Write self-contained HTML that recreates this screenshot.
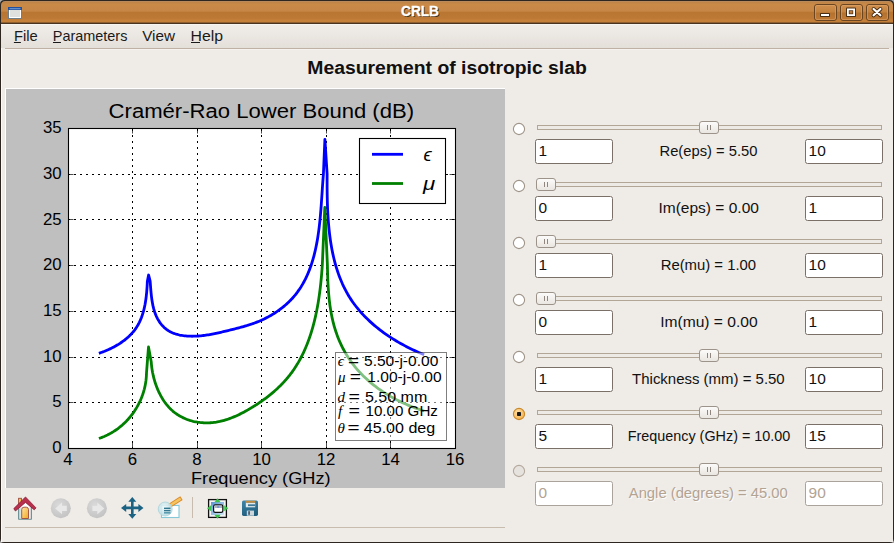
<!DOCTYPE html>
<html><head><meta charset="utf-8"><style>
html,body{margin:0;padding:0}
body{width:894px;height:543px;overflow:hidden;position:relative;background:#efebe7;font-family:"Liberation Sans", sans-serif}
.a{position:absolute}
</style></head><body>
<svg class="a" style="left:0;top:0" width="894" height="543" font-family='"Liberation Sans", sans-serif'>
<rect x="0" y="0" width="894" height="543" fill="#a8a8a8"/><path d="M0,538.5 L0,4.5 Q0,0 4.5,0 L889.5,0 Q894,0 894,4.5 L894,538.5 Q894,543 889.5,543 L4.5,543 Q0,543 0,538.5 Z" fill="#2d2520"/><rect x="1" y="24" width="892" height="518" fill="#efebe7"/><rect x="1" y="24" width="1" height="518" fill="#fbfaf9"/><defs><linearGradient id="tb" x1="0" y1="0" x2="0" y2="24" gradientUnits="userSpaceOnUse"><stop offset="0" stop-color="#b98a5c"/><stop offset="0.08" stop-color="#b98a5c"/><stop offset="0.10" stop-color="#c08447"/><stop offset="0.18" stop-color="#c98a48"/><stop offset="0.46" stop-color="#c68645"/><stop offset="0.52" stop-color="#b97633"/><stop offset="0.76" stop-color="#bc7835"/><stop offset="0.84" stop-color="#c5803a"/><stop offset="0.915" stop-color="#c47f39"/><stop offset="0.917" stop-color="#8f5f30"/><stop offset="0.957" stop-color="#8f5f30"/><stop offset="0.959" stop-color="#4a3420"/><stop offset="1" stop-color="#4a3420"/></linearGradient><linearGradient id="mb" x1="0" y1="24" x2="0" y2="48" gradientUnits="userSpaceOnUse"><stop offset="0" stop-color="#f1eeea"/><stop offset="1" stop-color="#e4dfd9"/></linearGradient><linearGradient id="btn" x1="0" y1="0" x2="0" y2="1"><stop offset="0" stop-color="#d0904f"/><stop offset="0.45" stop-color="#c5833f"/><stop offset="0.55" stop-color="#b5722f"/><stop offset="1" stop-color="#c07b36"/></linearGradient></defs><path d="M1,24 L1,5.5 Q1,1 5.5,1 L888.5,1 Q893,1 893,5.5 L893,24 Z" fill="url(#tb)"/><rect x="8.5" y="7.5" width="13" height="11" fill="#fff" stroke="#6f7f8a" stroke-width="1"/><rect x="10" y="10" width="10" height="7" fill="#dfe1de"/><rect x="8" y="7" width="14" height="3" fill="#1f4f9e"/><rect x="9.5" y="8.3" width="11" height="0.9" fill="#86abd9"/><text x="402.0" y="16.7" font-size="14.2" font-weight="bold" fill="#2e1e10" text-anchor="start" textLength="38" lengthAdjust="spacingAndGlyphs" opacity="0.9">CRLB</text><text x="401.0" y="15.7" font-size="14.2" font-weight="bold" fill="#ffffff" text-anchor="start" textLength="38" lengthAdjust="spacingAndGlyphs" stroke="#fff" stroke-width="0.35">CRLB</text><rect x="814.5" y="4.5" width="22" height="16" rx="2.5" fill="url(#btn)" stroke="#6b4420" stroke-width="1"/><rect x="815.5" y="5.5" width="20" height="14" rx="1.5" fill="none" stroke="#dca36b" stroke-opacity="0.6" stroke-width="1"/><rect x="840.5" y="4.5" width="22" height="16" rx="2.5" fill="url(#btn)" stroke="#6b4420" stroke-width="1"/><rect x="841.5" y="5.5" width="20" height="14" rx="1.5" fill="none" stroke="#dca36b" stroke-opacity="0.6" stroke-width="1"/><rect x="866.5" y="4.5" width="22" height="16" rx="2.5" fill="url(#btn)" stroke="#6b4420" stroke-width="1"/><rect x="867.5" y="5.5" width="20" height="14" rx="1.5" fill="none" stroke="#dca36b" stroke-opacity="0.6" stroke-width="1"/><rect x="820" y="13" width="10" height="4" rx="0.8" fill="#4a2e14"/><rect x="821" y="14" width="8" height="2" fill="#fff"/><rect x="846" y="7.5" width="10" height="9.5" rx="0.8" fill="#4a2e14"/><rect x="847" y="8.5" width="8" height="7.5" fill="#fff"/><rect x="848.8" y="10.3" width="4.4" height="3.9" fill="#4a2e14"/><rect x="849.5" y="11" width="3" height="2.5" fill="#b9773a"/><path d="M873.6,9 L880.4,15.3 M880.4,9 L873.6,15.3" stroke="#4a2e14" stroke-width="4" stroke-linecap="round"/><path d="M873.6,9 L880.4,15.3 M880.4,9 L873.6,15.3" stroke="#fff" stroke-width="2.2" stroke-linecap="round"/><rect x="1" y="24" width="892" height="24" fill="url(#mb)"/><rect x="1" y="24" width="892" height="1" fill="#f7f5f2"/><rect x="5" y="48" width="884" height="1" fill="#bfb2a4"/><rect x="5" y="49" width="884" height="1" fill="#f5f2ef"/><text x="13.95" y="40.8" font-size="14.2" font-weight="normal" fill="#1a1a1a" text-anchor="start" textLength="23.8" lengthAdjust="spacingAndGlyphs" >File</text><rect x="13.9" y="42" width="6.999999999999998" height="1" fill="#1a1a1a"/><text x="52.800000000000004" y="40.8" font-size="14.2" font-weight="normal" fill="#1a1a1a" text-anchor="start" textLength="74.6" lengthAdjust="spacingAndGlyphs" >Parameters</text><rect x="53" y="42" width="8" height="1" fill="#1a1a1a"/><text x="142.2" y="40.8" font-size="14.2" font-weight="normal" fill="#1a1a1a" text-anchor="start" textLength="32.8" lengthAdjust="spacingAndGlyphs" >View</text><text x="190.5" y="40.8" font-size="14.2" font-weight="normal" fill="#1a1a1a" text-anchor="start" textLength="32.5" lengthAdjust="spacingAndGlyphs" >Help</text><rect x="191" y="42" width="9" height="1" fill="#1a1a1a"/><text x="307.3" y="73.8" font-size="17.6" font-weight="bold" fill="#101010" text-anchor="start" textLength="279.5" lengthAdjust="spacingAndGlyphs" >Measurement of isotropic slab</text><rect x="5" y="88" width="500" height="400" fill="#ffffff"/><rect x="6" y="89" width="499" height="399" fill="#bfbfbf"/><rect x="68.0" y="128.0" width="387.0" height="320.0" fill="#fff"/><g stroke="#000" stroke-width="1" stroke-dasharray="2 4" fill="none" shape-rendering="crispEdges"><line x1="132.5" y1="449.0" x2="132.5" y2="128.0"/><line x1="197.5" y1="449.0" x2="197.5" y2="128.0"/><line x1="261.5" y1="449.0" x2="261.5" y2="128.0"/><line x1="326.5" y1="449.0" x2="326.5" y2="128.0"/><line x1="390.5" y1="449.0" x2="390.5" y2="128.0"/><line x1="68.0" y1="402.5" x2="455.0" y2="402.5"/><line x1="68.0" y1="357.5" x2="455.0" y2="357.5"/><line x1="68.0" y1="311.5" x2="455.0" y2="311.5"/><line x1="68.0" y1="265.5" x2="455.0" y2="265.5"/><line x1="68.0" y1="219.5" x2="455.0" y2="219.5"/><line x1="68.0" y1="174.5" x2="455.0" y2="174.5"/></g><g stroke="#000" stroke-width="0.7" fill="none"><line x1="132.5" y1="448.0" x2="132.5" y2="442.5"/><line x1="132.5" y1="128.0" x2="132.5" y2="133.5"/><line x1="197.5" y1="448.0" x2="197.5" y2="442.5"/><line x1="197.5" y1="128.0" x2="197.5" y2="133.5"/><line x1="261.5" y1="448.0" x2="261.5" y2="442.5"/><line x1="261.5" y1="128.0" x2="261.5" y2="133.5"/><line x1="326.5" y1="448.0" x2="326.5" y2="442.5"/><line x1="326.5" y1="128.0" x2="326.5" y2="133.5"/><line x1="390.5" y1="448.0" x2="390.5" y2="442.5"/><line x1="390.5" y1="128.0" x2="390.5" y2="133.5"/><line x1="68.0" y1="402.5" x2="73.5" y2="402.5"/><line x1="455.0" y1="402.5" x2="449.5" y2="402.5"/><line x1="68.0" y1="357.5" x2="73.5" y2="357.5"/><line x1="455.0" y1="357.5" x2="449.5" y2="357.5"/><line x1="68.0" y1="311.5" x2="73.5" y2="311.5"/><line x1="455.0" y1="311.5" x2="449.5" y2="311.5"/><line x1="68.0" y1="265.5" x2="73.5" y2="265.5"/><line x1="455.0" y1="265.5" x2="449.5" y2="265.5"/><line x1="68.0" y1="219.5" x2="73.5" y2="219.5"/><line x1="455.0" y1="219.5" x2="449.5" y2="219.5"/><line x1="68.0" y1="174.5" x2="73.5" y2="174.5"/><line x1="455.0" y1="174.5" x2="449.5" y2="174.5"/></g><path d="M100.22,352.87 L101.12,352.55 L102.03,352.22 L102.93,351.88 L103.83,351.54 L104.72,351.18 L105.62,350.82 L106.50,350.45 L107.39,350.07 L108.27,349.68 L109.15,349.28 L110.02,348.88 L110.89,348.46 L111.75,348.04 L112.61,347.61 L113.46,347.16 L114.31,346.71 L115.15,346.25 L115.98,345.79 L116.81,345.31 L117.62,344.82 L118.44,344.33 L119.24,343.82 L120.04,343.31 L120.82,342.78 L121.60,342.25 L122.37,341.71 L123.13,341.16 L123.89,340.59 L124.63,340.02 L125.36,339.44 L126.08,338.85 L126.79,338.26 L127.50,337.65 L128.19,337.03 L128.86,336.40 L129.53,335.76 L130.18,335.11 L130.83,334.46 L131.46,333.79 L132.07,333.11 L132.68,332.43 L133.27,331.73 L133.85,331.02 L134.41,330.31 L134.96,329.58 L135.49,328.84 L136.01,328.10 L136.52,327.34 L137.01,326.57 L137.48,325.79 L137.94,325.01 L138.38,324.21 L138.81,323.40 L139.23,322.59 L139.63,321.77 L140.02,320.93 L140.39,320.09 L140.75,319.25 L141.10,318.39 L141.44,317.53 L141.76,316.66 L142.07,315.78 L142.37,314.90 L142.66,314.01 L142.93,313.12 L143.20,312.22 L143.45,311.31 L143.70,310.40 L143.93,309.49 L144.15,308.57 L144.36,307.64 L144.57,306.71 L144.76,305.78 L144.95,304.85 L145.12,303.91 L145.29,302.97 L145.45,302.02 L145.60,301.08 L145.74,300.13 L145.88,299.18 L146.01,298.23 L146.13,297.28 L146.24,296.33 L146.35,295.37 L146.45,294.42 L146.55,293.47 L146.64,292.51 L146.72,291.56 L146.80,290.61 L146.88,289.66 L146.95,288.71 L147.01,287.76 L147.08,286.81 L147.13,285.87 L147.19,284.93 L147.24,283.99 L147.28,283.05 L147.33,282.12 L147.37,281.19 L148.60,275.00 L150.13,281.20 L150.23,282.33 L150.32,283.48 L150.41,284.66 L150.50,285.85 L150.60,287.06 L150.69,288.29 L150.79,289.53 L150.90,290.78 L151.01,292.05 L151.13,293.32 L151.26,294.60 L151.40,295.88 L151.55,297.17 L151.72,298.46 L151.90,299.75 L152.10,301.04 L152.31,302.33 L152.54,303.61 L152.79,304.89 L153.06,306.15 L153.36,307.41 L153.67,308.65 L154.02,309.88 L154.39,311.10 L154.78,312.30 L155.21,313.48 L155.66,314.64 L156.14,315.78 L156.65,316.90 L157.19,317.99 L157.76,319.07 L158.35,320.11 L158.98,321.13 L159.63,322.12 L160.32,323.08 L161.03,324.01 L161.77,324.92 L162.54,325.79 L163.34,326.62 L164.16,327.42 L165.02,328.19 L165.90,328.92 L166.82,329.61 L167.76,330.26 L168.73,330.87 L169.73,331.45 L170.75,331.98 L171.80,332.48 L172.88,332.95 L173.97,333.38 L175.08,333.77 L176.22,334.14 L177.37,334.46 L178.54,334.76 L179.72,335.03 L180.92,335.27 L182.14,335.48 L183.36,335.66 L184.59,335.81 L185.83,335.94 L187.08,336.05 L188.34,336.13 L189.60,336.18 L190.87,336.22 L192.13,336.23 L193.40,336.22 L194.67,336.19 L195.94,336.14 L197.20,336.08 L198.47,335.99 L199.73,335.89 L200.98,335.78 L202.24,335.65 L203.49,335.50 L204.75,335.34 L206.00,335.17 L207.24,334.98 L208.49,334.78 L209.73,334.57 L210.97,334.36 L212.21,334.13 L213.44,333.89 L214.68,333.64 L215.91,333.38 L217.14,333.12 L218.36,332.85 L219.59,332.57 L220.81,332.29 L222.03,332.01 L223.25,331.72 L224.46,331.43 L225.67,331.13 L226.89,330.83 L228.09,330.54 L229.30,330.24 L230.50,329.94 L231.70,329.64 L232.90,329.34 L234.10,329.04 L235.29,328.74 L236.48,328.44 L237.67,328.13 L238.85,327.82 L240.04,327.50 L241.22,327.19 L242.39,326.86 L243.57,326.53 L244.74,326.19 L245.91,325.85 L247.08,325.50 L248.24,325.14 L249.40,324.77 L250.56,324.40 L251.72,324.01 L252.87,323.61 L254.02,323.20 L255.17,322.78 L256.31,322.35 L257.45,321.90 L258.59,321.44 L259.72,320.97 L260.85,320.48 L261.98,319.98 L263.11,319.46 L264.23,318.93 L265.35,318.38 L266.46,317.81 L267.57,317.23 L268.67,316.64 L269.76,316.03 L270.85,315.41 L271.94,314.78 L273.01,314.13 L274.08,313.46 L275.13,312.79 L276.18,312.09 L277.22,311.39 L278.25,310.67 L279.27,309.94 L280.28,309.20 L281.28,308.44 L282.27,307.68 L283.24,306.90 L284.20,306.10 L285.15,305.30 L286.09,304.48 L287.01,303.65 L287.92,302.81 L288.81,301.96 L289.69,301.10 L290.55,300.23 L291.40,299.34 L292.23,298.44 L293.04,297.54 L293.84,296.62 L294.62,295.70 L295.38,294.76 L296.13,293.81 L296.87,292.85 L297.59,291.89 L298.29,290.91 L298.98,289.93 L299.66,288.93 L300.32,287.93 L300.97,286.92 L301.60,285.89 L302.22,284.86 L302.82,283.83 L303.41,282.78 L303.99,281.72 L304.56,280.66 L305.11,279.59 L305.65,278.51 L306.17,277.43 L306.69,276.33 L307.19,275.23 L307.68,274.13 L308.16,273.01 L308.62,271.89 L309.07,270.76 L309.52,269.63 L309.95,268.49 L310.37,267.34 L310.78,266.19 L311.18,265.03 L311.57,263.87 L311.94,262.70 L312.31,261.52 L312.67,260.34 L313.02,259.16 L313.35,257.97 L313.68,256.78 L314.00,255.58 L314.31,254.37 L314.61,253.17 L314.91,251.95 L315.19,250.74 L315.47,249.52 L315.73,248.30 L315.99,247.07 L316.24,245.84 L316.49,244.61 L316.72,243.37 L316.95,242.13 L317.17,240.89 L317.39,239.65 L317.60,238.40 L317.80,237.16 L317.99,235.91 L318.18,234.65 L318.36,233.40 L318.54,232.14 L318.71,230.89 L318.88,229.63 L319.04,228.37 L319.19,227.11 L319.34,225.85 L319.48,224.59 L319.62,223.32 L319.76,222.06 L319.89,220.80 L320.02,219.54 L320.14,218.27 L320.26,217.01 L320.38,215.75 L320.49,214.49 L320.60,213.23 L320.70,211.97 L320.81,210.71 L320.91,209.45 L321.00,208.19 L321.10,206.94 L321.19,205.69 L321.28,204.44 L321.37,203.19 L321.46,201.94 L321.54,200.70 L321.63,199.45 L321.71,198.22 L321.79,196.98 L321.88,195.75 L321.96,194.51 L322.04,193.29 L322.12,192.06 L322.20,190.84 L322.28,189.63 L322.36,188.41 L322.44,187.21 L322.52,186.00 L322.60,184.80 L322.69,183.60 L322.77,182.41 L322.86,181.23 L322.95,180.05 L323.04,178.87 L323.13,177.70 L323.22,176.53 L323.32,175.37 L323.41,174.22 L324.90,139.30 L327.12,174.20 L327.11,176.34 L327.10,178.49 L327.10,180.66 L327.10,182.84 L327.10,185.03 L327.11,187.22 L327.13,189.43 L327.15,191.64 L327.18,193.87 L327.21,196.10 L327.26,198.34 L327.31,200.58 L327.37,202.83 L327.45,205.08 L327.53,207.34 L327.62,209.60 L327.73,211.86 L327.85,214.13 L327.99,216.40 L328.14,218.67 L328.30,220.94 L328.48,223.20 L328.67,225.47 L328.89,227.74 L329.12,230.00 L329.37,232.26 L329.63,234.52 L329.92,236.78 L330.23,239.03 L330.55,241.27 L330.90,243.51 L331.28,245.74 L331.67,247.96 L332.09,250.18 L332.53,252.39 L333.00,254.59 L333.49,256.77 L334.01,258.95 L334.56,261.12 L335.13,263.28 L335.73,265.42 L336.37,267.55 L337.03,269.67 L337.72,271.77 L338.44,273.86 L339.19,275.93 L339.98,277.99 L340.80,280.03 L341.65,282.05 L342.53,284.05 L343.46,286.04 L344.41,288.01 L345.41,289.95 L346.44,291.88 L347.50,293.79 L348.61,295.67 L349.75,297.53 L350.94,299.37 L352.16,301.18 L353.42,302.97 L354.72,304.74 L356.06,306.49 L357.43,308.21 L358.84,309.91 L360.28,311.58 L361.75,313.23 L363.26,314.86 L364.79,316.46 L366.36,318.04 L367.96,319.59 L369.58,321.12 L371.24,322.63 L372.91,324.11 L374.62,325.57 L376.35,327.01 L378.10,328.42 L379.88,329.81 L381.67,331.17 L383.49,332.51 L385.33,333.83 L387.19,335.12 L389.06,336.39 L390.96,337.63 L392.86,338.85 L394.79,340.04 L396.73,341.21 L398.68,342.35 L400.65,343.48 L402.62,344.57 L404.61,345.64 L406.61,346.69 L408.61,347.71 L410.63,348.71 L412.65,349.68 L414.67,350.63 L416.71,351.56 L418.74,352.45 L420.78,353.33 L422.83,354.18" fill="none" stroke="#0000ff" stroke-width="2.8" stroke-linejoin="round" stroke-linecap="square"/><path d="M100.24,437.99 L101.06,437.69 L101.87,437.39 L102.68,437.08 L103.48,436.75 L104.28,436.42 L105.07,436.07 L105.86,435.72 L106.64,435.35 L107.42,434.98 L108.19,434.59 L108.95,434.20 L109.71,433.80 L110.46,433.39 L111.21,432.97 L111.95,432.53 L112.68,432.09 L113.41,431.65 L114.13,431.19 L114.84,430.72 L115.55,430.25 L116.26,429.76 L116.95,429.27 L117.64,428.77 L118.32,428.26 L119.00,427.74 L119.67,427.22 L120.33,426.68 L120.99,426.14 L121.64,425.59 L122.28,425.04 L122.91,424.47 L123.54,423.90 L124.16,423.32 L124.78,422.73 L125.38,422.14 L125.98,421.54 L126.58,420.93 L127.16,420.31 L127.74,419.69 L128.31,419.06 L128.87,418.42 L129.42,417.78 L129.97,417.13 L130.51,416.47 L131.04,415.81 L131.56,415.14 L132.08,414.47 L132.59,413.79 L133.09,413.10 L133.58,412.41 L134.06,411.71 L134.54,411.00 L135.00,410.29 L135.46,409.58 L135.91,408.86 L136.35,408.13 L136.79,407.40 L137.21,406.66 L137.63,405.92 L138.03,405.18 L138.43,404.42 L138.82,403.67 L139.20,402.91 L139.57,402.14 L139.93,401.37 L140.29,400.60 L140.63,399.82 L140.97,399.04 L141.29,398.25 L141.61,397.46 L141.92,396.66 L142.22,395.86 L142.51,395.06 L142.78,394.26 L143.05,393.45 L143.31,392.63 L143.56,391.82 L143.80,391.00 L144.03,390.17 L144.26,389.35 L144.47,388.52 L144.67,387.69 L144.86,386.85 L145.04,386.02 L145.21,385.18 L145.37,384.33 L145.52,383.49 L145.66,382.64 L145.79,381.79 L145.91,380.94 L146.01,380.09 L146.11,379.23 L146.20,378.37 L146.27,377.51 L146.34,376.65 L146.39,375.79 L146.44,374.93 L146.47,374.06 L146.49,373.20 L148.50,347.00 L151.26,361.98 L151.34,363.12 L151.43,364.26 L151.54,365.41 L151.67,366.57 L151.82,367.73 L151.98,368.89 L152.16,370.06 L152.36,371.23 L152.57,372.41 L152.81,373.59 L153.06,374.76 L153.32,375.94 L153.61,377.12 L153.91,378.29 L154.23,379.47 L154.57,380.64 L154.92,381.81 L155.29,382.97 L155.68,384.13 L156.09,385.29 L156.51,386.43 L156.95,387.58 L157.41,388.71 L157.89,389.83 L158.38,390.95 L158.89,392.06 L159.42,393.15 L159.97,394.24 L160.53,395.31 L161.11,396.37 L161.71,397.42 L162.33,398.46 L162.96,399.47 L163.61,400.48 L164.28,401.47 L164.97,402.44 L165.67,403.39 L166.39,404.33 L167.13,405.24 L167.89,406.14 L168.66,407.02 L169.45,407.87 L170.26,408.71 L171.09,409.52 L171.94,410.31 L172.80,411.07 L173.68,411.81 L174.58,412.53 L175.49,413.22 L176.42,413.88 L177.37,414.53 L178.33,415.14 L179.30,415.74 L180.29,416.31 L181.29,416.85 L182.31,417.37 L183.34,417.87 L184.38,418.34 L185.43,418.79 L186.50,419.22 L187.57,419.62 L188.65,419.99 L189.75,420.35 L190.85,420.68 L191.96,420.98 L193.08,421.27 L194.20,421.53 L195.33,421.76 L196.47,421.98 L197.62,422.17 L198.77,422.33 L199.92,422.48 L201.08,422.60 L202.24,422.69 L203.41,422.77 L204.57,422.82 L205.74,422.85 L206.92,422.86 L208.09,422.84 L209.26,422.80 L210.43,422.74 L211.61,422.66 L212.78,422.55 L213.95,422.42 L215.12,422.27 L216.28,422.10 L217.44,421.90 L218.60,421.68 L219.76,421.45 L220.91,421.19 L222.06,420.91 L223.20,420.61 L224.35,420.29 L225.48,419.95 L226.62,419.60 L227.75,419.23 L228.88,418.84 L230.00,418.43 L231.12,418.01 L232.24,417.57 L233.35,417.12 L234.46,416.66 L235.56,416.18 L236.66,415.68 L237.76,415.18 L238.85,414.66 L239.94,414.13 L241.02,413.59 L242.10,413.03 L243.17,412.47 L244.25,411.90 L245.31,411.32 L246.37,410.73 L247.43,410.13 L248.49,409.53 L249.53,408.91 L250.58,408.30 L251.62,407.67 L252.65,407.04 L253.68,406.40 L254.71,405.76 L255.73,405.11 L256.75,404.46 L257.75,403.80 L258.76,403.13 L259.76,402.45 L260.75,401.77 L261.74,401.09 L262.72,400.39 L263.69,399.69 L264.66,398.99 L265.62,398.28 L266.58,397.56 L267.53,396.83 L268.47,396.10 L269.40,395.36 L270.33,394.62 L271.25,393.86 L272.16,393.11 L273.07,392.34 L273.97,391.57 L274.86,390.79 L275.74,390.00 L276.61,389.21 L277.48,388.41 L278.34,387.60 L279.18,386.79 L280.02,385.97 L280.86,385.14 L281.68,384.31 L282.49,383.47 L283.30,382.62 L284.09,381.76 L284.88,380.90 L285.66,380.02 L286.42,379.15 L287.18,378.26 L287.93,377.37 L288.66,376.47 L289.39,375.56 L290.11,374.64 L290.81,373.72 L291.51,372.79 L292.20,371.85 L292.87,370.91 L293.54,369.96 L294.19,369.00 L294.84,368.03 L295.47,367.06 L296.10,366.08 L296.71,365.09 L297.32,364.10 L297.92,363.10 L298.50,362.10 L299.08,361.08 L299.65,360.07 L300.21,359.04 L300.76,358.01 L301.30,356.98 L301.83,355.94 L302.35,354.89 L302.87,353.84 L303.37,352.79 L303.87,351.72 L304.36,350.66 L304.84,349.58 L305.31,348.51 L305.77,347.43 L306.22,346.34 L306.67,345.25 L307.11,344.15 L307.54,343.06 L307.96,341.95 L308.37,340.84 L308.78,339.73 L309.18,338.62 L309.57,337.50 L309.95,336.37 L310.33,335.25 L310.70,334.12 L311.06,332.99 L311.41,331.85 L311.76,330.71 L312.10,329.57 L312.43,328.42 L312.76,327.27 L313.08,326.12 L313.39,324.97 L313.70,323.81 L314.00,322.65 L314.29,321.49 L314.57,320.33 L314.85,319.16 L315.13,318.00 L315.40,316.83 L315.66,315.66 L315.91,314.48 L316.16,313.31 L316.41,312.13 L316.64,310.96 L316.88,309.78 L317.10,308.60 L317.32,307.42 L317.54,306.24 L317.75,305.06 L317.96,303.88 L318.16,302.69 L318.35,301.51 L318.54,300.33 L318.72,299.14 L318.90,297.96 L319.08,296.78 L319.25,295.59 L319.42,294.41 L319.58,293.23 L319.73,292.04 L319.89,290.86 L320.04,289.68 L320.18,288.50 L320.32,287.32 L320.45,286.14 L320.59,284.96 L320.71,283.78 L320.84,282.61 L320.96,281.43 L321.08,280.26 L321.19,279.09 L321.30,277.92 L321.41,276.75 L321.51,275.59 L321.61,274.42 L321.70,273.26 L321.80,272.10 L321.89,270.95 L321.98,269.79 L322.06,268.64 L322.14,267.49 L322.22,266.34 L322.30,265.20 L324.80,207.50 L327.42,265.20 L327.45,267.07 L327.49,268.95 L327.53,270.84 L327.57,272.73 L327.63,274.63 L327.69,276.53 L327.75,278.44 L327.83,280.35 L327.92,282.26 L328.01,284.18 L328.12,286.10 L328.24,288.02 L328.37,289.95 L328.51,291.87 L328.67,293.80 L328.84,295.72 L329.03,297.65 L329.23,299.57 L329.45,301.49 L329.69,303.41 L329.94,305.33 L330.22,307.24 L330.51,309.14 L330.83,311.05 L331.16,312.95 L331.52,314.84 L331.90,316.72 L332.30,318.60 L332.73,320.48 L333.18,322.34 L333.66,324.19 L334.16,326.04 L334.69,327.88 L335.25,329.70 L335.84,331.52 L336.45,333.33 L337.10,335.12 L337.77,336.90 L338.47,338.67 L339.20,340.42 L339.95,342.17 L340.74,343.90 L341.55,345.61 L342.39,347.31 L343.26,348.99 L344.16,350.66 L345.08,352.31 L346.04,353.95 L347.02,355.57 L348.03,357.17 L349.06,358.75 L350.13,360.32 L351.22,361.86 L352.34,363.39 L353.49,364.90 L354.66,366.38 L355.86,367.85 L357.09,369.29 L358.34,370.72 L359.62,372.12 L360.93,373.51 L362.25,374.87 L363.60,376.22 L364.98,377.54 L366.37,378.84 L367.79,380.12 L369.23,381.39 L370.68,382.63 L372.16,383.85 L373.66,385.05 L375.18,386.22 L376.71,387.38 L378.26,388.52 L379.83,389.63 L381.42,390.73 L383.02,391.80 L384.63,392.85 L386.26,393.88 L387.91,394.89 L389.56,395.88 L391.23,396.85 L392.92,397.80 L394.61,398.72 L396.31,399.62 L398.03,400.51 L399.75,401.37 L401.49,402.20 L403.23,403.02 L404.98,403.82 L406.74,404.59 L408.51,405.34 L410.28,406.08 L412.06,406.78 L413.84,407.47 L415.63,408.14 L417.42,408.78 L419.21,409.40 L421.01,410.00 L422.81,410.58" fill="none" stroke="#008000" stroke-width="2.8" stroke-linejoin="round" stroke-linecap="square"/><rect x="68.5" y="128.5" width="387.0" height="320.0" fill="none" stroke="#000" stroke-width="1.1"/><rect x="359.5" y="138.5" width="86" height="65" fill="#fff" stroke="#000" stroke-width="1.1"/><line x1="372" y1="154.3" x2="403" y2="154.3" stroke="#0000ff" stroke-width="2.8"/><line x1="372" y1="183.5" x2="403" y2="183.5" stroke="#008000" stroke-width="2.8"/><text x="423.6" y="161.3" font-size="19" font-weight="normal" fill="#000" text-anchor="start" textLength="8.2" lengthAdjust="spacingAndGlyphs" font-style="italic">ϵ</text><text x="423.0" y="190.2" font-size="18" font-weight="normal" fill="#000" text-anchor="start" textLength="12.2" lengthAdjust="spacingAndGlyphs" font-style="italic">μ</text><rect x="335.5" y="352.5" width="111" height="88" fill="#fff" fill-opacity="0.5" stroke="#000" stroke-opacity="0.5" stroke-width="1"/><text x="337.8" y="365.8" font-size="15" font-family='"Liberation Serif", serif' font-style="italic">ϵ</text><text x="348.1" y="365.8" font-size="14" font-weight="normal" fill="#000" text-anchor="start" textLength="11.1" lengthAdjust="spacingAndGlyphs" >=</text><text x="364.0" y="365.8" font-size="14" font-weight="normal" fill="#000" text-anchor="start" textLength="74.3" lengthAdjust="spacingAndGlyphs" >5.50-j-0.00</text><text x="338.1" y="382.4" font-size="15" font-family='"Liberation Serif", serif' font-style="italic">μ</text><text x="349.8" y="382.4" font-size="14" font-weight="normal" fill="#000" text-anchor="start" textLength="11.2" lengthAdjust="spacingAndGlyphs" >=</text><text x="367.3" y="382.4" font-size="14" font-weight="normal" fill="#000" text-anchor="start" textLength="74.3" lengthAdjust="spacingAndGlyphs" >1.00-j-0.00</text><text x="337.6" y="402.1" font-size="15" font-family='"Liberation Serif", serif' font-style="italic">d</text><text x="348.5" y="402.1" font-size="14" font-weight="normal" fill="#000" text-anchor="start" textLength="11.5" lengthAdjust="spacingAndGlyphs" >=</text><text x="364.9" y="402.1" font-size="14" font-weight="normal" fill="#000" text-anchor="start" textLength="62.4" lengthAdjust="spacingAndGlyphs" >5.50 mm</text><text x="338.1" y="416" font-size="15" font-family='"Liberation Serif", serif' font-style="italic">f</text><text x="348.5" y="416" font-size="14" font-weight="normal" fill="#000" text-anchor="start" textLength="11.5" lengthAdjust="spacingAndGlyphs" >=</text><text x="365.5" y="416" font-size="14" font-weight="normal" fill="#000" text-anchor="start" textLength="72.4" lengthAdjust="spacingAndGlyphs" >10.00 GHz</text><text x="337.6" y="433" font-size="15" font-family='"Liberation Serif", serif' font-style="italic">θ</text><text x="347.40000000000003" y="433" font-size="14" font-weight="normal" fill="#000" text-anchor="start" textLength="12.1" lengthAdjust="spacingAndGlyphs" >=</text><text x="363.8" y="433" font-size="14" font-weight="normal" fill="#000" text-anchor="start" textLength="71.4" lengthAdjust="spacingAndGlyphs" >45.00 deg</text><text x="68.0" y="464.6" font-size="16.8" font-weight="normal" fill="#000" text-anchor="middle" >4</text><text x="132.5" y="464.6" font-size="16.8" font-weight="normal" fill="#000" text-anchor="middle" >6</text><text x="197.0" y="464.6" font-size="16.8" font-weight="normal" fill="#000" text-anchor="middle" >8</text><text x="261.5" y="464.6" font-size="16.8" font-weight="normal" fill="#000" text-anchor="middle" >10</text><text x="326.0" y="464.6" font-size="16.8" font-weight="normal" fill="#000" text-anchor="middle" >12</text><text x="390.5" y="464.6" font-size="16.8" font-weight="normal" fill="#000" text-anchor="middle" >14</text><text x="455.0" y="464.6" font-size="16.8" font-weight="normal" fill="#000" text-anchor="middle" >16</text><text x="61.6" y="453.2" font-size="16.8" font-weight="normal" fill="#000" text-anchor="end" >0</text><text x="61.6" y="407.48571428571427" font-size="16.8" font-weight="normal" fill="#000" text-anchor="end" >5</text><text x="61.6" y="361.77142857142854" font-size="16.8" font-weight="normal" fill="#000" text-anchor="end" >10</text><text x="61.6" y="316.0571428571429" font-size="16.8" font-weight="normal" fill="#000" text-anchor="end" >15</text><text x="61.6" y="270.34285714285716" font-size="16.8" font-weight="normal" fill="#000" text-anchor="end" >20</text><text x="61.6" y="224.6285714285714" font-size="16.8" font-weight="normal" fill="#000" text-anchor="end" >25</text><text x="61.6" y="178.9142857142857" font-size="16.8" font-weight="normal" fill="#000" text-anchor="end" >30</text><text x="61.6" y="133.2" font-size="16.8" font-weight="normal" fill="#000" text-anchor="end" >35</text><text x="108.6" y="117.6" font-size="19.4" font-weight="normal" fill="#000" text-anchor="start" textLength="305.5" lengthAdjust="spacingAndGlyphs" >Cramér-Rao Lower Bound (dB)</text><text x="191.0" y="484.4" font-size="16.8" font-weight="normal" fill="#000" text-anchor="start" textLength="139.6" lengthAdjust="spacingAndGlyphs" >Frequency (GHz)</text><rect x="5" y="527" width="500" height="1" fill="#c8bcaf"/><rect x="192" y="497" width="1" height="21" fill="#c8bcaf"/><defs><linearGradient id="door" x1="0" y1="0" x2="1" y2="1"><stop offset="0" stop-color="#fde7a8"/><stop offset="1" stop-color="#f2a81d"/></linearGradient><linearGradient id="wall" x1="0" y1="0" x2="1" y2="0"><stop offset="0" stop-color="#b8c2c4"/><stop offset="0.3" stop-color="#ffffff"/><stop offset="0.8" stop-color="#ffffff"/><stop offset="1" stop-color="#b8c2c4"/></linearGradient></defs><rect x="18.6" y="498.3" width="2.8" height="8" fill="#f5c35a" stroke="#9b4a3a" stroke-width="0.9"/><path d="M18.5,507.5 L25.5,501 L31.5,507 L31.5,519.3 L18.5,519.3 Z" fill="url(#wall)" stroke="#6f9297" stroke-width="1"/><path d="M21.7,518.5 L21.7,509.5 Q21.7,507.2 24,507.2 L26.3,507.2 Q28.5,507.2 28.5,509.5 L28.5,518.5 Z" fill="url(#door)" stroke="#9b4a3a" stroke-width="0.9"/><path d="M13.8,508.6 L25.5,497 L36,507.9 L34.2,509.8 L25.5,502.4 L15.4,511 Z" fill="#b8304e" stroke="#8a1c33" stroke-width="0.8" stroke-linejoin="round"/><defs><radialGradient id="ci" cx="0.4" cy="0.35" r="0.7"><stop offset="0" stop-color="#dadada"/><stop offset="1" stop-color="#c2c2c2"/></radialGradient></defs><circle cx="60.8" cy="508.2" r="10" fill="url(#ci)"/><path d="M55.2,508.4 L62,502.4 L62,505.8 L66.8,505.8 L66.8,510.9 L62,510.9 L62,514.3 Z" fill="#e8e8e8"/><circle cx="96.9" cy="508.2" r="10" fill="url(#ci)"/><path d="M104.3,508.4 L97.3,502.4 L97.3,505.8 L92.4,505.8 L92.4,510.9 L97.3,510.9 L97.3,514.3 Z" fill="#e8e8e8"/><g fill="#1b6283"><path d="M132.3,497 L136.3,501.8 L133.6,501.8 L133.6,506.6 L138.4,506.6 L138.4,503.9 L143.5,507.9 L138.4,511.9 L138.4,509.2 L133.6,509.2 L133.6,514 L136.3,514 L132.3,518.8 L128.3,514 L131,514 L131,509.2 L126.2,509.2 L126.2,511.9 L121,507.9 L126.2,503.9 L126.2,506.6 L131,506.6 L131,501.8 L128.3,501.8 Z"/></g><rect x="161.5" y="505.5" width="17.5" height="12" fill="#fff" stroke="#86c8d8" stroke-width="1.1"/><path d="M171,504.8 L179.6,499.4" stroke="#d98a2a" stroke-width="4.4" stroke-linecap="square"/><path d="M171,504.8 L179.6,499.4" stroke="#f6c45e" stroke-width="2.6" stroke-linecap="square"/><defs><radialGradient id="lens" cx="0.45" cy="0.4" r="0.6"><stop offset="0" stop-color="#eef8fa"/><stop offset="1" stop-color="#b7dbe2"/></radialGradient></defs><circle cx="165.2" cy="509" r="7" fill="url(#lens)" fill-opacity="0.9" stroke="#a9d3dc" stroke-width="0.8"/><g fill="#34788f"><rect x="164" y="507.6" width="6.5" height="1.4"/><rect x="164" y="509.9" width="6.5" height="1.4"/><rect x="164" y="512" width="6.5" height="1.6" fill="#5a9bb0"/></g><defs><linearGradient id="sp" x1="0" y1="0" x2="1" y2="1"><stop offset="0" stop-color="#5b95d6"/><stop offset="1" stop-color="#cfe6f6"/></linearGradient></defs><rect x="208.6" y="499.6" width="17.8" height="17.8" fill="#f4f4f4" stroke="#111" stroke-width="1.3"/><rect x="211" y="502" width="13" height="13" fill="url(#sp)"/><rect x="213.6" y="504.8" width="9.2" height="7.6" rx="1.6" fill="#fff" stroke="#111" stroke-width="1.2"/><rect x="214.4" y="505.6" width="7.6" height="2.4" fill="#a9b4bf"/><rect x="217.2" y="505.6" width="2" height="2.4" fill="#7b95d6"/><g fill="#3cc24c"><path d="M217.5,498.2 L220.6,502.2 L214.4,502.2 Z"/><path d="M217.5,518.8 L220.6,514.8 L214.4,514.8 Z"/><path d="M207,508.2 L211,505.2 L211,511.2 Z"/><path d="M228.2,508.2 L224.2,505.2 L224.2,511.2 Z"/></g><defs><linearGradient id="fl" x1="0" y1="0" x2="0.3" y2="1"><stop offset="0" stop-color="#3f86aa"/><stop offset="1" stop-color="#215e7e"/></linearGradient></defs><path d="M242,502.2 Q242,500.6 243.6,500.6 L256.4,500.6 Q258,500.6 258,502.2 L258,514.3 Q258,515.9 256.4,515.9 L243.6,515.9 Q242,515.9 242,514.3 Z" fill="url(#fl)"/><rect x="245.5" y="500.8" width="9.8" height="2" fill="#c28a3e"/><rect x="245.8" y="502.9" width="9.4" height="4.4" fill="#dfe9ee"/><rect x="248" y="504.3" width="7" height="1.8" fill="#3f7897"/><rect x="246.8" y="510.6" width="7.2" height="5.1" fill="#cdd6da"/><rect x="248.4" y="511.2" width="1.3" height="3.6" fill="#14304a"/><defs><linearGradient id="hd" x1="0" y1="0" x2="0" y2="1"><stop offset="0" stop-color="#fdfcfb"/><stop offset="1" stop-color="#e9e5e0"/></linearGradient><radialGradient id="rsel" cx="0.4" cy="0.35" r="0.7"><stop offset="0" stop-color="#ffe0a8"/><stop offset="1" stop-color="#f6b045"/></radialGradient></defs><circle cx="519" cy="129" r="5.6" fill="#fff" stroke="#9f9589" stroke-width="1.1"/><rect x="537.5" y="125.5" width="344" height="4" fill="#ede9e5" stroke="#b2a697" stroke-width="1"/><rect x="699.5" y="121.5" width="19" height="12" rx="2.5" fill="url(#hd)" stroke="#9c948b" stroke-width="1"/><rect x="707" y="125" width="1" height="5" fill="#8f877f"/><rect x="710" y="125" width="1" height="5" fill="#8f877f"/><rect x="535.5" y="139.5" width="77" height="24" rx="2" fill="#fff" stroke="#7a7068" stroke-width="1"/><text x="538.6" y="156.4" font-size="15" font-weight="normal" fill="#111" text-anchor="start" textLength="8.6" lengthAdjust="spacingAndGlyphs" >1</text><rect x="805.5" y="139.5" width="77" height="24" rx="2" fill="#fff" stroke="#7a7068" stroke-width="1"/><text x="808.6" y="156.4" font-size="15" font-weight="normal" fill="#111" text-anchor="start" textLength="17.2" lengthAdjust="spacingAndGlyphs" >10</text><text x="708.5" y="156" font-size="14.2" font-weight="normal" fill="#111" text-anchor="middle" textLength="98" lengthAdjust="spacingAndGlyphs" >Re(eps) = 5.50</text><circle cx="519" cy="186" r="5.6" fill="#fff" stroke="#9f9589" stroke-width="1.1"/><rect x="537.5" y="182.5" width="344" height="4" fill="#ede9e5" stroke="#b2a697" stroke-width="1"/><rect x="536.5" y="178.5" width="19" height="12" rx="2.5" fill="url(#hd)" stroke="#9c948b" stroke-width="1"/><rect x="544" y="182" width="1" height="5" fill="#8f877f"/><rect x="547" y="182" width="1" height="5" fill="#8f877f"/><rect x="535.5" y="196.5" width="77" height="24" rx="2" fill="#fff" stroke="#7a7068" stroke-width="1"/><text x="538.6" y="213.4" font-size="15" font-weight="normal" fill="#111" text-anchor="start" textLength="8.6" lengthAdjust="spacingAndGlyphs" >0</text><rect x="805.5" y="196.5" width="77" height="24" rx="2" fill="#fff" stroke="#7a7068" stroke-width="1"/><text x="808.6" y="213.4" font-size="15" font-weight="normal" fill="#111" text-anchor="start" textLength="8.6" lengthAdjust="spacingAndGlyphs" >1</text><text x="708.7" y="213" font-size="14.2" font-weight="normal" fill="#111" text-anchor="middle" textLength="100.5" lengthAdjust="spacingAndGlyphs" >Im(eps) = 0.00</text><circle cx="519" cy="243" r="5.6" fill="#fff" stroke="#9f9589" stroke-width="1.1"/><rect x="537.5" y="239.5" width="344" height="4" fill="#ede9e5" stroke="#b2a697" stroke-width="1"/><rect x="536.5" y="235.5" width="19" height="12" rx="2.5" fill="url(#hd)" stroke="#9c948b" stroke-width="1"/><rect x="544" y="239" width="1" height="5" fill="#8f877f"/><rect x="547" y="239" width="1" height="5" fill="#8f877f"/><rect x="535.5" y="253.5" width="77" height="24" rx="2" fill="#fff" stroke="#7a7068" stroke-width="1"/><text x="538.6" y="270.4" font-size="15" font-weight="normal" fill="#111" text-anchor="start" textLength="8.6" lengthAdjust="spacingAndGlyphs" >1</text><rect x="805.5" y="253.5" width="77" height="24" rx="2" fill="#fff" stroke="#7a7068" stroke-width="1"/><text x="808.6" y="270.4" font-size="15" font-weight="normal" fill="#111" text-anchor="start" textLength="17.2" lengthAdjust="spacingAndGlyphs" >10</text><text x="708.4" y="270" font-size="14.2" font-weight="normal" fill="#111" text-anchor="middle" textLength="95.5" lengthAdjust="spacingAndGlyphs" >Re(mu) = 1.00</text><circle cx="519" cy="300" r="5.6" fill="#fff" stroke="#9f9589" stroke-width="1.1"/><rect x="537.5" y="296.5" width="344" height="4" fill="#ede9e5" stroke="#b2a697" stroke-width="1"/><rect x="536.5" y="292.5" width="19" height="12" rx="2.5" fill="url(#hd)" stroke="#9c948b" stroke-width="1"/><rect x="544" y="296" width="1" height="5" fill="#8f877f"/><rect x="547" y="296" width="1" height="5" fill="#8f877f"/><rect x="535.5" y="310.5" width="77" height="24" rx="2" fill="#fff" stroke="#7a7068" stroke-width="1"/><text x="538.6" y="327.4" font-size="15" font-weight="normal" fill="#111" text-anchor="start" textLength="8.6" lengthAdjust="spacingAndGlyphs" >0</text><rect x="805.5" y="310.5" width="77" height="24" rx="2" fill="#fff" stroke="#7a7068" stroke-width="1"/><text x="808.6" y="327.4" font-size="15" font-weight="normal" fill="#111" text-anchor="start" textLength="8.6" lengthAdjust="spacingAndGlyphs" >1</text><text x="708.9" y="327" font-size="14.2" font-weight="normal" fill="#111" text-anchor="middle" textLength="97.5" lengthAdjust="spacingAndGlyphs" >Im(mu) = 0.00</text><circle cx="519" cy="357" r="5.6" fill="#fff" stroke="#9f9589" stroke-width="1.1"/><rect x="537.5" y="353.5" width="344" height="4" fill="#ede9e5" stroke="#b2a697" stroke-width="1"/><rect x="699.5" y="349.5" width="19" height="12" rx="2.5" fill="url(#hd)" stroke="#9c948b" stroke-width="1"/><rect x="707" y="353" width="1" height="5" fill="#8f877f"/><rect x="710" y="353" width="1" height="5" fill="#8f877f"/><rect x="535.5" y="367.5" width="77" height="24" rx="2" fill="#fff" stroke="#7a7068" stroke-width="1"/><text x="538.6" y="384.4" font-size="15" font-weight="normal" fill="#111" text-anchor="start" textLength="8.6" lengthAdjust="spacingAndGlyphs" >1</text><rect x="805.5" y="367.5" width="77" height="24" rx="2" fill="#fff" stroke="#7a7068" stroke-width="1"/><text x="808.6" y="384.4" font-size="15" font-weight="normal" fill="#111" text-anchor="start" textLength="17.2" lengthAdjust="spacingAndGlyphs" >10</text><text x="708.4" y="384" font-size="14.2" font-weight="normal" fill="#111" text-anchor="middle" textLength="152.6" lengthAdjust="spacingAndGlyphs" >Thickness (mm) = 5.50</text><circle cx="519" cy="414" r="5.6" fill="url(#rsel)" stroke="#c98a2e" stroke-width="1.1"/><rect x="517" y="412" width="4" height="4" rx="0.8" fill="#1a1a1a"/><rect x="537.5" y="410.5" width="344" height="4" fill="#ede9e5" stroke="#b2a697" stroke-width="1"/><rect x="699.5" y="406.5" width="19" height="12" rx="2.5" fill="url(#hd)" stroke="#9c948b" stroke-width="1"/><rect x="707" y="410" width="1" height="5" fill="#8f877f"/><rect x="710" y="410" width="1" height="5" fill="#8f877f"/><rect x="535.5" y="424.5" width="77" height="24" rx="2" fill="#fff" stroke="#7a7068" stroke-width="1"/><text x="538.6" y="441.4" font-size="15" font-weight="normal" fill="#111" text-anchor="start" textLength="8.6" lengthAdjust="spacingAndGlyphs" >5</text><rect x="805.5" y="424.5" width="77" height="24" rx="2" fill="#fff" stroke="#7a7068" stroke-width="1"/><text x="808.6" y="441.4" font-size="15" font-weight="normal" fill="#111" text-anchor="start" textLength="17.2" lengthAdjust="spacingAndGlyphs" >15</text><text x="709.0" y="441" font-size="14.2" font-weight="normal" fill="#111" text-anchor="middle" textLength="162.5" lengthAdjust="spacingAndGlyphs" >Frequency (GHz) = 10.00</text><circle cx="519" cy="471" r="5.6" fill="#e6e2dd" stroke="#b5aa9e" stroke-width="1.1"/><rect x="537.5" y="467.5" width="344" height="4" fill="#ede9e5" stroke="#b2a697" stroke-width="1"/><rect x="699.5" y="463.5" width="19" height="12" rx="2.5" fill="url(#hd)" stroke="#9c948b" stroke-width="1"/><rect x="707" y="467" width="1" height="5" fill="#8f877f"/><rect x="710" y="467" width="1" height="5" fill="#8f877f"/><rect x="535.5" y="481.5" width="77" height="24" rx="2" fill="#fff" stroke="#a9a39c" stroke-width="1"/><text x="539.6" y="499.4" font-size="15" font-weight="normal" fill="#ffffff" text-anchor="start" textLength="8.6" lengthAdjust="spacingAndGlyphs" opacity="0.85">0</text><text x="538.6" y="498.4" font-size="15" font-weight="normal" fill="#b2a393" text-anchor="start" textLength="8.6" lengthAdjust="spacingAndGlyphs" >0</text><rect x="805.5" y="481.5" width="77" height="24" rx="2" fill="#fff" stroke="#a9a39c" stroke-width="1"/><text x="809.6" y="499.4" font-size="15" font-weight="normal" fill="#ffffff" text-anchor="start" textLength="17.2" lengthAdjust="spacingAndGlyphs" opacity="0.85">90</text><text x="808.6" y="498.4" font-size="15" font-weight="normal" fill="#b2a393" text-anchor="start" textLength="17.2" lengthAdjust="spacingAndGlyphs" >90</text><text x="709.3" y="499" font-size="14.2" font-weight="normal" fill="#ffffff" text-anchor="middle" textLength="159" lengthAdjust="spacingAndGlyphs" opacity="0.85">Angle (degrees) = 45.00</text><text x="708.3" y="498" font-size="14.2" font-weight="normal" fill="#b2a393" text-anchor="middle" textLength="159" lengthAdjust="spacingAndGlyphs" >Angle (degrees) = 45.00</text>
</svg>
</body></html>
